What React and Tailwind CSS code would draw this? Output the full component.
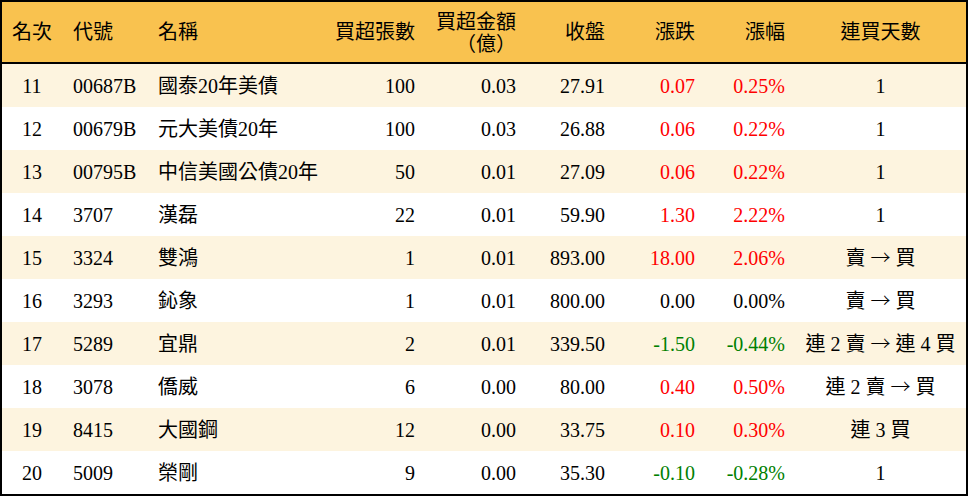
const rows = [
  { rank: 11, code: '00687B', name: '國泰20年美債', vol: '100', amt: '0.03', close: '27.91', chg: '0.07', pct: '0.25%', days: '1' },
  { rank: 12, code: '00679B', name: '元大美債20年', vol: '100', amt: '0.03', close: '26.88', chg: '0.06', pct: '0.22%', days: '1' },
  { rank: 13, code: '00795B', name: '中信美國公債20年', vol: '50', amt: '0.01', close: '27.09', chg: '0.06', pct: '0.22%', days: '1' },
  { rank: 14, code: '3707', name: '漢磊', vol: '22', amt: '0.01', close: '59.90', chg: '1.30', pct: '2.22%', days: '1' },
  { rank: 15, code: '3324', name: '雙鴻', vol: '1', amt: '0.01', close: '893.00', chg: '18.00', pct: '2.06%', days: '賣 → 買' },
  { rank: 16, code: '3293', name: '鈊象', vol: '1', amt: '0.01', close: '800.00', chg: '0.00', pct: '0.00%', days: '賣 → 買' },
  { rank: 17, code: '5289', name: '宜鼎', vol: '2', amt: '0.01', close: '339.50', chg: '-1.50', pct: '-0.44%', days: '連 2 賣 → 連 4 買' },
  { rank: 18, code: '3078', name: '僑威', vol: '6', amt: '0.00', close: '80.00', chg: '0.40', pct: '0.50%', days: '連 2 賣 → 買' },
  { rank: 19, code: '8415', name: '大國鋼', vol: '12', amt: '0.00', close: '33.75', chg: '0.10', pct: '0.30%', days: '連 3 買' },
  { rank: 20, code: '5009', name: '榮剛', vol: '9', amt: '0.00', close: '35.30', chg: '-0.10', pct: '-0.28%', days: '1' },
];

const tone = (v) => {
  if (v.startsWith('-')) return 'text-[#008000]';
  if (parseFloat(v) > 0) return 'text-[#ff0000]';
  return 'text-black';
};

// the arrow in Liberation Serif is short; take the CJK font's wider one
const Days = ({ text }) => {
  const parts = text.split('→');
  return parts.map((p, i) => (
    <span key={i}>
      {p}
      {i < parts.length - 1 && <span className="font-['Noto_Sans_CJK_TC',sans-serif] font-light">→</span>}
    </span>
  ));
};

const cols = 'grid grid-cols-[60px_86px_172px_105px_101px_89px_90px_90px_171px]';

export default function App() {
  return (
    <div className="w-[968px] h-[496px] bg-white font-['Liberation_Serif','Noto_Sans_CJK_TC',serif] text-[20px] text-black">
      <div className="border-2 border-black h-full flex flex-col">
        {/* header */}
        <div className={`${cols} h-[62px] bg-[#f9c24f] border-b-2 border-black items-center leading-[22px]`}>
          <div className="text-center">名次</div>
          <div className="pl-[11px]">代號</div>
          <div className="pl-[10px]">名稱</div>
          <div className="text-right pr-[10px]">買超張數</div>
          <div className="text-right pr-[10px] flex flex-col items-end">
            <span className="leading-[20px]">買超金額</span>
            <span className="leading-[20px] mt-[1px] font-['Noto_Sans_CJK_TC',sans-serif]">（億）</span>
          </div>
          <div className="text-right pr-[10px]">收盤</div>
          <div className="text-right pr-[10px]">漲跌</div>
          <div className="text-right pr-[10px]">漲幅</div>
          <div className="text-center">連買天數</div>
        </div>

        {/* rows */}
        {rows.map((r, i) => (
          <div
            key={r.rank}
            className={`${cols} h-[43px] items-center whitespace-nowrap ${i % 2 === 0 ? 'bg-[#fdf4df]' : 'bg-white'}`}
          >
            <div className="text-center">{r.rank}</div>
            <div className="pl-[11px]">{r.code}</div>
            <div className="pl-[10px]">{r.name}</div>
            <div className="text-right pr-[10px]">{r.vol}</div>
            <div className="text-right pr-[10px]">{r.amt}</div>
            <div className="text-right pr-[10px]">{r.close}</div>
            <div className={`text-right pr-[10px] ${tone(r.chg)}`}>{r.chg}</div>
            <div className={`text-right pr-[10px] ${tone(r.pct)}`}>{r.pct}</div>
            <div className="text-center"><Days text={r.days} /></div>
          </div>
        ))}
      </div>
    </div>
  );
}
